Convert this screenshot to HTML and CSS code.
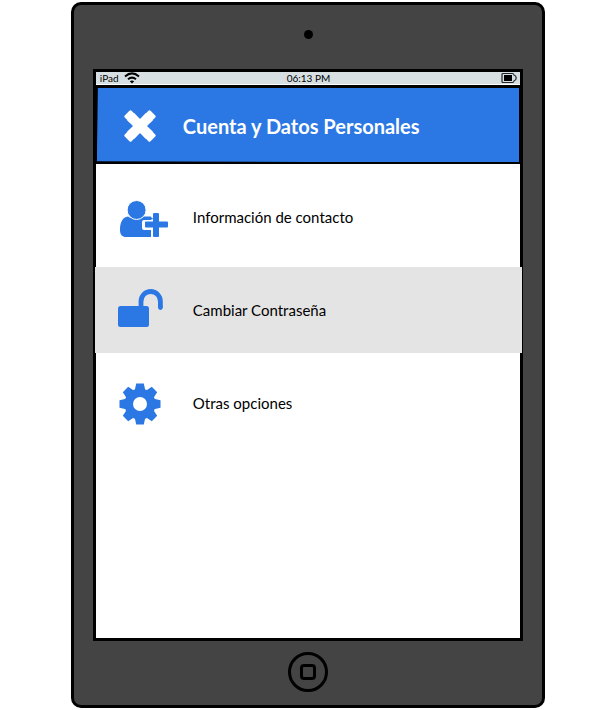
FILE: index.html
```html
<!DOCTYPE html>
<html lang="es">
<head>
<meta charset="utf-8">
<meta name="viewport" content="width=device-width, initial-scale=1">
<title>Cuenta y Datos Personales</title>
<link rel="stylesheet" href="styles.css">
</head>
<body>
<div class="device">
  <div class="camera-strip"><span class="camera"></span></div>
  <div class="screen">
    <div class="status">
      <div class="status-left">
        <span>iPad</span>
        <svg width="16" height="12" viewBox="0 0 16 12" fill="none" stroke="#000" stroke-width="2" aria-hidden="true">
          <path d="M1 4.4Q8-1.6 15 4.4"/>
          <path d="M4 7.2Q8 4 12 7.2"/>
          <path d="M5.800 9.200Q8 7.800 10.200 9.200L8 11.600Z" fill="#000" stroke="none"/>
        </svg>
      </div>
      <span>06:13 PM</span>
      <div class="status-right">
        <svg width="16" height="12" viewBox="0 0 16 12" aria-hidden="true">
          <path d="M2 1.5H11.5Q12.7 1.5 13 3Q15.2 3.6 15.2 6Q15.2 8.4 13 9Q12.7 10.5 11.5 10.5H2Q1 10.5 1 9.5V2.5Q1 1.5 2 1.5Z" fill="none" stroke="#222" stroke-width="1.2"/>
          <rect x="3" y="3" width="8" height="6" fill="#000"/>
        </svg>
      </div>
    </div>
    <header class="header">
      <button class="close" type="button" aria-label="Cerrar">
        <svg width="34" height="34" viewBox="0 0 34 34" aria-hidden="true">
          <path d="M7.500 7.500L26.500 26.500M26.500 7.500L7.500 26.500" stroke="#fff" stroke-width="10"/>
          <path d="M7.500 2.800L2.800 7.500L7.500 12.200L12.200 7.500ZM26.500 2.800L31.200 7.500L26.500 12.200L21.800 7.500ZM7.500 21.800L2.800 26.500L7.500 31.200L12.200 26.500ZM26.500 21.800L21.800 26.500L26.500 31.200L31.200 26.500Z" fill="#fff" stroke="#fff" stroke-width="3" stroke-linejoin="round"/>
        </svg>
      </button>
      <h1>Cuenta y Datos Personales</h1>
    </header>
    <nav class="options">
      <a class="option" href="#contacto">
        <svg width="52" height="44" viewBox="0 -4 52 44" fill="#2b78e4" aria-hidden="true">
          <path d="M11 17.500C5.500 18 3 23.500 3 31C3 35.500 5 38 9 38H34V17.500H27C24 20.200 14.500 20.200 11 17.500Z"/>
          <circle cx="19.600" cy="11" r="9.500" stroke="#fff" stroke-width="1"/>
          <path d="M36 14H42V23H51V29H42V38H36V29H27V23H36Z" stroke="#fff" stroke-width="4" stroke-linejoin="round"/>
          <path d="M29 20Q32 16.500 36 19.500L35 20.500H29Z"/>
          <path d="M37 14H41Q42 14 42 15V22.500H50Q51 22.500 51 23.500V27.500Q51 28.500 50 28.500H42V37Q42 38 41 38H37Q36 38 36 37V28.500H29Q28 28.500 28 27.500V23.500Q28 22.500 29 22.500H36V15Q36 14 37 14Z"/>
        </svg>
        <span>Información de contacto</span>
      </a>
      <a class="option selected" href="#contrasena">
        <svg width="52" height="44" viewBox="0 0 52 44" fill="#2b78e4" aria-hidden="true">
          <rect x="1" y="18" width="31" height="21" rx="2.500"/>
          <path d="M24 19V13.500A9.700 10 0 0 1 43.400 13.500V19.500" fill="none" stroke="#2b78e4" stroke-width="4.800"/>
          <circle cx="43.400" cy="19.500" r="2.400"/>
        </svg>
        <span>Cambiar Contraseña</span>
      </a>
      <a class="option" href="#opciones">
        <svg width="52" height="44" viewBox="0 -2 52 44" aria-hidden="true">
          <g fill="#2b78e4" transform="translate(23 21)">
            <path id="tooth" d="M-5.200-14L-3.800-20.500H3.800L5.200-14V14L3.800 20.500H-3.800L-5.200 14Z"/>
            <use href="#tooth" transform="rotate(45)"/>
            <use href="#tooth" transform="rotate(90)"/>
            <use href="#tooth" transform="rotate(135)"/>
            <circle r="15.500"/>
            <circle r="7" fill="#fff"/>
          </g>
        </svg>
        <span>Otras opciones</span>
      </a>
    </nav>
  </div>
  <button class="home" type="button" aria-label="Inicio"><span class="home-mark"></span></button>
</div>
</body>
</html>
```
FILE: styles.css
```css
* {
  box-sizing: border-box;
}

body {
  margin: 0;
  padding: 2px 0;
  background: #fff;
  color: #000;
  font-family: Lato, "Open Sans", sans-serif;
}

.device {
  display: flex;
  flex-direction: column;
  width: 77%;
  margin: 0 auto;
  padding: 0 19px 13px;
  border: 3px solid #000;
  border-radius: 10px;
  background: #444;
}

.camera-strip {
  display: flex;
  justify-content: center;
  height: 64px;
  padding-top: 25px;
}

.camera {
  width: 9px;
  height: 9px;
  border-radius: 50%;
  background: #000;
}

.screen {
  min-height: calc(100vh - 138px);
  border: 3px solid #000;
  background: #fff;
}

.status {
  display: grid;
  grid-template-columns: 1fr auto 1fr;
  align-items: center;
  height: 13px;
  padding: 0 3px 0 4px;
  border-bottom: 1px solid #fff;
  background: #d7dfe2;
  font-size: 10px;
  line-height: 12px;
}

.status svg {
  display: block;
}

.status-left {
  display: flex;
  align-items: center;
  gap: 5px;
}

.status-right {
  display: flex;
  justify-content: flex-end;
}

.header {
  position: relative;
  display: flex;
  align-items: center;
  gap: 26px;
  height: 79px;
  padding: 2px 27px 0;
  background: #000;
}

.header::before {
  content: "";
  position: absolute;
  inset: 2px 1px 2px 1px;
  background: #2b78e4;
  clip-path: polygon(1px 1px, 100% 1px, 100% 100%, 50% 100%, 0 99%);
}

.close {
  position: relative;
  padding: 0;
  border: 0;
  background: none;
}

.close svg {
  display: block;
}

h1 {
  position: relative;
  margin: 0;
  color: #fff;
  font-size: 20px;
  line-height: 24px;
  font-weight: 700;
}

.options {
  display: flex;
  flex-direction: column;
  gap: 7px;
  padding-top: 10px;
}

.option {
  display: flex;
  align-items: center;
  gap: 24px;
  height: 86px;
  margin: 0 -2px 0 -1px;
  padding: 0 22px;
  color: #000;
  font-size: 15px;
  line-height: 20px;
  text-decoration: none;
}

.selected {
  background: #e4e4e4;
}

.home {
  display: flex;
  align-items: center;
  justify-content: center;
  align-self: center;
  width: 40px;
  height: 40px;
  margin-top: 11px;
  padding: 0;
  border: 3px solid #000;
  border-radius: 50%;
  background: none;
}

.home-mark {
  width: 16px;
  height: 16px;
  border: 3px solid #000;
  border-radius: 4px;
}
```
